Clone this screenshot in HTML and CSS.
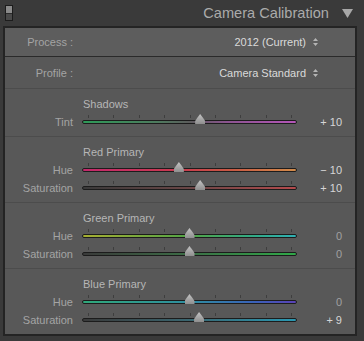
FILE: index.html
```html
<!DOCTYPE html>
<html lang="en">
<head>
    <meta charset="UTF-8">
    <meta name="viewport" content="width=device-width, initial-scale=1.0">
    <title>Camera Calibration</title>
    <link rel="stylesheet" href="styles.css">
</head>
<body>
    <div class="header">
        <span class="toggle"><span class="toggle-on"></span></span>
        <span class="title">Camera Calibration</span>
        <svg class="collapse" width="11" height="9" viewBox="0 0 11 9"><path d="M0 0H11L5.5 9Z" fill="#a8a8a8"/></svg>
    </div>

    <div class="panel">
        <div class="row process">
            <span class="label">Process :</span>
            <span class="choice">2012 (Current)
                <svg class="updown" width="5" height="8" viewBox="0 0 5 8"><path d="M0 3H5L2.5 0Z M0 5H5L2.5 8Z" fill="#b4b4b4"/></svg>
            </span>
        </div>
        <div class="row profile">
            <span class="label">Profile :</span>
            <span class="choice">Camera Standard
                <svg class="updown" width="5" height="8" viewBox="0 0 5 8"><path d="M0 3H5L2.5 0Z M0 5H5L2.5 8Z" fill="#b4b4b4"/></svg>
            </span>
        </div>

        <div class="section">
            <div class="section-title">Shadows</div>
            <div class="slider">
                <span class="label">Tint</span>
                <div class="track tint"><div class="ticks"><i></i><i></i><i></i><i></i><i></i><i></i><i></i><i></i><i></i></div><span class="thumb" style="left: 55%"></span></div>
                <span class="value">+ 10</span>
            </div>
        </div>

        <div class="section">
            <div class="section-title">Red Primary</div>
            <div class="slider">
                <span class="label">Hue</span>
                <div class="track red-hue"><div class="ticks"><i></i><i></i><i></i><i></i><i></i><i></i><i></i><i></i><i></i></div><span class="thumb" style="left: 45%"></span></div>
                <span class="value">− 10</span>
            </div>
            <div class="slider">
                <span class="label">Saturation</span>
                <div class="track red-sat"><div class="ticks"><i></i><i></i><i></i><i></i><i></i><i></i><i></i><i></i><i></i></div><span class="thumb" style="left: 55%"></span></div>
                <span class="value">+ 10</span>
            </div>
        </div>

        <div class="section">
            <div class="section-title">Green Primary</div>
            <div class="slider">
                <span class="label">Hue</span>
                <div class="track green-hue"><div class="ticks"><i></i><i></i><i></i><i></i><i></i><i></i><i></i><i></i><i></i></div><span class="thumb" style="left: 50%"></span></div>
                <span class="value zero">0</span>
            </div>
            <div class="slider">
                <span class="label">Saturation</span>
                <div class="track green-sat"><div class="ticks"><i></i><i></i><i></i><i></i><i></i><i></i><i></i><i></i><i></i></div><span class="thumb" style="left: 50%"></span></div>
                <span class="value zero">0</span>
            </div>
        </div>

        <div class="section">
            <div class="section-title">Blue Primary</div>
            <div class="slider">
                <span class="label">Hue</span>
                <div class="track blue-hue"><div class="ticks"><i></i><i></i><i></i><i></i><i></i><i></i><i></i><i></i><i></i></div><span class="thumb" style="left: 50%"></span></div>
                <span class="value zero">0</span>
            </div>
            <div class="slider">
                <span class="label">Saturation</span>
                <div class="track blue-sat"><div class="ticks"><i></i><i></i><i></i><i></i><i></i><i></i><i></i><i></i><i></i></div><span class="thumb" style="left: 54.5%"></span></div>
                <span class="value">+ 9</span>
            </div>
        </div>
    </div>
</body>
</html>
```

FILE: styles.css
```css
body {
    margin: 0;
    width: 364px;
    height: 341px;
    background: #3a3a3a;
    font-family: "Liberation Sans", Arial, sans-serif;
    font-size: 11px;
    color: #a4a4a4;
    overflow: hidden;
}

/* Kopfzeile */
.header {
    height: 26px;
    display: flex;
    align-items: center;
    padding: 0 11px 0 5px;
}

.toggle {
    width: 6px;
    height: 14px;
    border: 1px solid #1c1c1c;
    background: #4a4a4a;
    display: flex;
    flex-direction: column;
}

.toggle-on {
    height: 7px;
    background: #8a8a8a;
    border-bottom: 1px solid #2a2a2a;
}

.title {
    margin-left: auto;
    font-size: 14.6px;
    color: #ababab;
}

.collapse {
    margin-left: 13px;
    margin-top: 1px;
}

/* Panel */
.panel {
    margin: 0 7px 0 3px;
    border: 2px solid #242424;
    background: #585858;
}

.row {
    display: flex;
    align-items: center;
}

.label {
    width: 68px;
    text-align: right;
    flex-shrink: 0;
}

.process {
    height: 28px;
    background: #5d5d5d;
    border-bottom: 1px solid #2a2a2a;
}

.profile {
    height: 31px;
}

.choice {
    margin-left: auto;
    margin-right: 37px;
    color: #dadada;
    display: flex;
    align-items: center;
}

.updown {
    margin-left: 7px;
}

.section {
    border-top: 1px solid #4c4c4c;
    padding: 8px 0 5px;
}

.section-title {
    height: 14px;
    line-height: 14px;
    padding-left: 78px;
    margin-bottom: 2px;
    color: #b6b6b6;
}

.slider {
    display: flex;
    align-items: center;
    height: 18px;
}

.track {
    position: relative;
    width: 213px;
    height: 2px;
    margin-left: 9px;
    border: 1px solid #1c1c1c;
    border-radius: 2px;
}

.ticks {
    position: absolute;
    left: 5px;
    right: 4px;
    top: -6px;
    height: 3px;
    display: flex;
    justify-content: space-between;
}

.ticks i {
    width: 1px;
    background: #3e3e3e;
}

.thumb {
    position: absolute;
    top: -7px;
    width: 10px;
    height: 10px;
    margin-left: -5px;
    background: linear-gradient(#c4c4c4, #8e8e8e);
    clip-path: polygon(50% 0, 80% 40%, 100% 70%, 100% 100%, 0 100%, 0 70%, 20% 40%);
}

.value {
    width: 45px;
    text-align: right;
    color: #d6d6d6;
}

.value.zero {
    color: #a0a0a0;
}

/* Farbverläufe */
.tint { background: linear-gradient(to right, #2e9a58, #4e7a5e 35%, #5c5c5c 50%, #8c5490 68%, #b456b8); }
.red-hue { background: linear-gradient(to right, #c4296c, #c83a4e 45%, #c85a44 70%, #d28c4a); }
.red-sat { background: linear-gradient(to right, #3a3a3a, #6a4646 50%, #b44a4c); }
.green-hue { background: linear-gradient(to right, #a6ae32, #52a446 50%, #32aa86 80%, #30b0b4); }
.green-sat { background: linear-gradient(to right, #3a3a3a, #3c6e46 50%, #30a848); }
.blue-hue { background: linear-gradient(to right, #30a87a, #2f8ea0 50%, #3a62b8 80%, #5a42b6); }
.blue-sat { background: linear-gradient(to right, #3a3a3a, #3a6670 50%, #2a98b2); }
```
